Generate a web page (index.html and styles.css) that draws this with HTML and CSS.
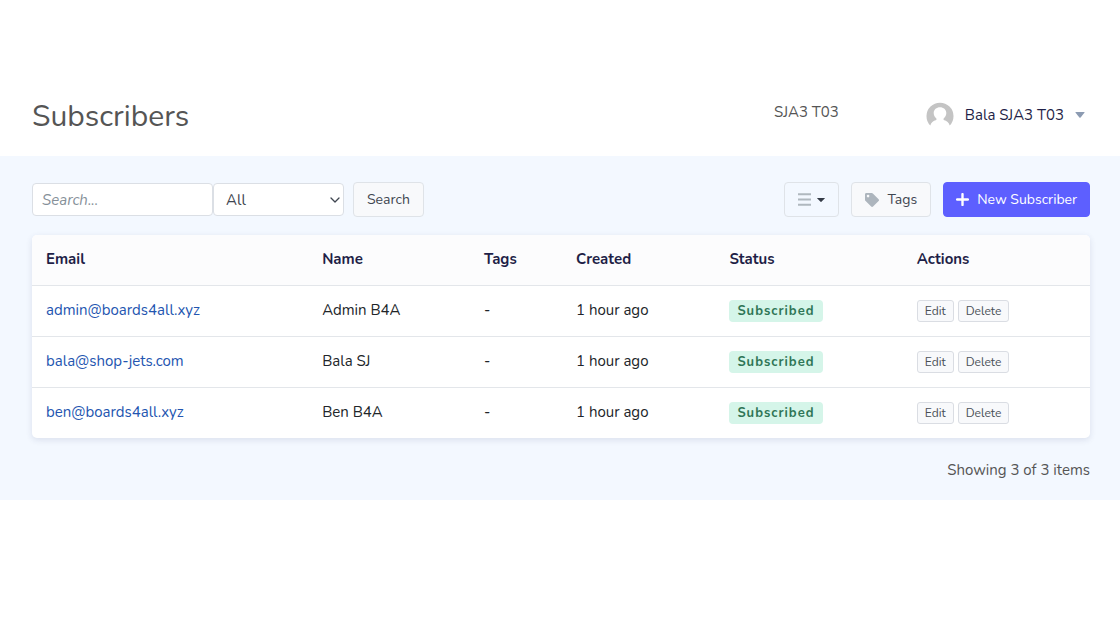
FILE: index.html
```html
<!DOCTYPE html>
<html lang="en">
<head>
<meta charset="utf-8">
<meta name="viewport" content="width=device-width, initial-scale=1">
<title>Subscribers</title>
<link rel="stylesheet" href="styles.css">
</head>
<body>
<header class="header">
  <h1 class="title">Subscribers</h1>
  <div class="account">
    <span class="workspace">SJA3 T03</span>
    <button class="user" type="button">
      <svg class="avatar" viewBox="0 0 28 28" aria-hidden="true">
        <path fill="#c4c4c4" d="M4.300 24.600A13.500 13.500 0 1 1 23.700 24.600C22.900 21.600 21 19.800 17.600 19.100V17.400C19.400 16 20.300 14 20.300 12C20.300 8.500 17.500 6.200 14 6.200S7.700 8.500 7.700 12C7.700 14 8.600 16 10.400 17.400V19.100C7 19.800 5.100 21.600 4.300 24.600Z"/>
      </svg>
      <span>Bala SJA3 T03</span>
      <svg class="caret-user" viewBox="0 0 10 6" aria-hidden="true"><path fill="#8c9bb2" d="M1 0h8q1 0 .4.800L5.600 5.500q-.6.600-1.200 0L.600.800Q0 0 1 0Z"/></svg>
    </button>
  </div>
</header>
<main class="content">
  <div class="toolbar">
    <form class="search" role="search">
      <input class="field query" type="text" placeholder="Search..." aria-label="Search subscribers">
      <span class="select-wrap">
        <select class="field filter" aria-label="Status filter"><option>All</option></select>
        <svg class="chevron" viewBox="0 0 10 6" aria-hidden="true"><path d="M1 1l4 4 4-4" fill="none" stroke="#3f4650" stroke-width="1.300" stroke-linecap="round" stroke-linejoin="round"/></svg>
      </span>
      <button class="btn search-btn" type="submit">Search</button>
    </form>
    <div class="tools">
      <button class="btn btn-menu" type="button" aria-label="More options">
        <svg class="bars" viewBox="0 0 12 12" aria-hidden="true"><path d="M0 1.200h12M0 6h12M0 10.800h12" stroke="#b0b8bf" stroke-width="1.900"/></svg>
        <svg class="caret" viewBox="0 0 8 4" aria-hidden="true"><path d="M.5 0h7q.8 0 .2.600L4.400 3.800q-.4.400-.8 0L.300.600Q-.3 0 .5 0Z" fill="#343a46"/></svg>
      </button>
      <button class="btn btn-tags" type="button">
        <svg class="tag" viewBox="0 0 512 512" aria-hidden="true"><path fill="#adb5bd" d="M0 252V48C0 21.500 21.500 0 48 0h204a48 48 0 0 1 34 14l212 212c18.700 18.700 18.700 49.100 0 67.900L294 498c-18.700 18.700-49.100 18.700-67.900 0L14 286a48 48 0 0 1-14-34zM112 64a48 48 0 1 0 0 96 48 48 0 0 0 0-96z"/></svg>
        <span>Tags</span>
      </button>
      <button class="btn btn-primary" type="button">
        <svg class="plus" viewBox="0 0 12 12" aria-hidden="true"><path d="M6 1v10M1 6h10" stroke="#fff" stroke-width="2.200" stroke-linecap="round"/></svg>
        <span>New Subscriber</span>
      </button>
    </div>
  </div>
  <div class="card">
    <table class="table">
      <colgroup><col class="c-email"><col class="c-name"><col class="c-tags"><col class="c-created"><col class="c-status"><col class="c-actions"></colgroup>
      <thead>
        <tr><th>Email</th><th>Name</th><th>Tags</th><th>Created</th><th>Status</th><th>Actions</th></tr>
      </thead>
      <tbody>
        <tr>
          <td><a href="#">admin@boards4all.xyz</a></td><td>Admin B4A</td><td>-</td><td>1 hour ago</td>
          <td><span class="badge">Subscribed</span></td>
          <td><div class="actions"><button class="btn-sm" type="button">Edit</button><button class="btn-sm" type="button">Delete</button></div></td>
        </tr>
        <tr>
          <td><a href="#">bala@shop-jets.com</a></td><td>Bala SJ</td><td>-</td><td>1 hour ago</td>
          <td><span class="badge">Subscribed</span></td>
          <td><div class="actions"><button class="btn-sm" type="button">Edit</button><button class="btn-sm" type="button">Delete</button></div></td>
        </tr>
        <tr>
          <td><a href="#">ben@boards4all.xyz</a></td><td>Ben B4A</td><td>-</td><td>1 hour ago</td>
          <td><span class="badge">Subscribed</span></td>
          <td><div class="actions"><button class="btn-sm" type="button">Edit</button><button class="btn-sm" type="button">Delete</button></div></td>
        </tr>
      </tbody>
    </table>
  </div>
  <p class="summary">Showing 3 of 3 items</p>
</main>
</body>
</html>
```
FILE: styles.css
```css
* { box-sizing: border-box; }
body {
  margin: 0;
  background: #fff;
  color: #212529;
  font: 15px/24px Nunito, Lato, "Open Sans", sans-serif;
}
button, input, select { font: inherit; color: inherit; margin: 0; }
button { cursor: pointer; }
svg { display: block; flex: none; }

.header {
  display: flex;
  justify-content: space-between;
  align-items: flex-start;
  padding: 96px 35px 18px 32px;
}
.title {
  margin: 0;
  font-size: 30px;
  line-height: 42px;
  font-weight: 400;
  color: #555;
}
.account { display: flex; align-items: flex-start; gap: 87px; color: #555; }
.workspace { padding-top: 4px; }
.user {
  display: flex;
  align-items: center;
  padding: 5px 0 0;
  border: 0;
  background: none;
  color: #1f1f47;
}
.avatar { width: 28px; height: 28px; margin-right: 11px; }
.caret-user { width: 10px; height: 6px; margin-left: 11px; }

.content { background: #f3f8ff; padding: 26px 30px 18px 32px; }
.toolbar, .search, .tools { display: flex; align-items: center; }
.toolbar { justify-content: space-between; margin-bottom: 18px; }
.tools { gap: 12px; }
.field {
  height: 33px;
  padding: 0 9px;
  border: 1px solid #dbdfe5;
  border-radius: 4px;
  background: #fff;
  color: #3f4650;
}
.query { width: 181px; }
.query::placeholder { color: #869099; font-style: italic; opacity: 1; }
.select-wrap { display: grid; align-items: center; width: 131px; }
.filter { grid-area: 1 / 1; width: 100%; padding: 0 12px; appearance: none; }
.chevron { grid-area: 1 / 1; justify-self: end; width: 10px; height: 6px; margin-right: 4px; pointer-events: none; }
.btn {
  display: flex;
  align-items: center;
  justify-content: center;
  height: 35px;
  padding: 0 13px;
  border: 1px solid #dfe3e8;
  border-radius: 4px;
  background: #f8f9fb;
  color: #3f4650;
  font-size: 14px;
  white-space: nowrap;
}
.search-btn { margin-left: 9px; }
.btn-menu { gap: 6px; background: #f3f8ff; }
.bars { width: 13px; height: 13px; }
.caret { width: 8px; height: 4px; }
.btn-tags { gap: 8px; }
.tag { width: 14px; height: 14px; }
.btn-primary { gap: 8px; padding: 0 12px; background: #5d5fff; border-color: #5d5fff; color: #fff; }
.plus { width: 13px; height: 13px; }

.card {
  overflow: hidden;
  border-radius: 5px;
  background: #fff;
  box-shadow: 0 2px 6px rgba(40, 50, 110, 0.12);
}
.table { width: 100%; border-collapse: collapse; table-layout: fixed; }
.c-email { width: 26.1%; }
.c-name { width: 15.3%; }
.c-tags { width: 8.7%; }
.c-created { width: 14.5%; }
.c-status { width: 17.7%; }
.c-actions { width: 17.7%; }
.table th, .table td { padding: 0 14px; text-align: left; vertical-align: middle; }
.table th { height: 50px; padding-bottom: 2px; background: #fcfcfd; color: #1f1f47; font-weight: 700; }
.table td { height: 51px; padding-bottom: 2px; border-top: 1px solid #e3e6ea; }
.table a { color: #2355b0; text-decoration: none; }
.badge {
  display: inline-block;
  padding: 0 8px;
  border-radius: 4px;
  background: #d5f5e9;
  color: #2f7556;
  font-size: 13px;
  line-height: 22px;
  font-weight: 700;
  letter-spacing: 1px;
  vertical-align: middle;
}
.actions { display: flex; gap: 4px; padding-top: 2px; }
.btn-sm {
  height: 22px;
  padding: 0 7px;
  border: 1px solid #dadde3;
  border-radius: 3px;
  background: #f8f9fb;
  color: #495057;
  font-size: 12px;
  line-height: 20px;
}
.summary { margin: 20px 0 0; text-align: right; color: #555; }
```
